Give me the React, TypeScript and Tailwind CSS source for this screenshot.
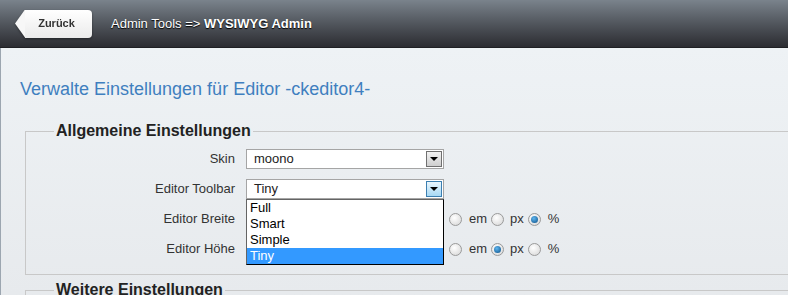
import React from 'react'

const font = { fontFamily: '"Liberation Sans", Arial, sans-serif' }

function Radio({ checked }: { checked?: boolean }) {
  return (
    <span className="relative inline-flex size-[13px] shrink-0 items-center justify-center rounded-full border border-[#9a9a9a] bg-[radial-gradient(circle_at_40%_35%,#ffffff,#d4d4d4)]">
      {checked && (
        <span className="size-[7px] rounded-full bg-[radial-gradient(circle_at_40%_35%,#5fb6f0,#0b4f86)]" />
      )}
    </span>
  )
}

function Select({ value, active }: { value: string; active?: boolean }) {
  return (
    <div className="flex h-[20px] w-[198px] items-stretch border border-[#a5a5a5] bg-white">
      <span className="flex flex-1 items-center pl-[7px] text-[13px] text-[#222]">{value}</span>
      <span
        className={
          active
            ? 'm-px flex w-[16px] items-center justify-center border border-[#3c7fb1] bg-gradient-to-b from-[#eaf6fd] to-[#a7d9f5]'
            : 'm-px flex w-[16px] items-center justify-center border border-[#707070] bg-gradient-to-b from-[#f2f2f2] to-[#cfcfcf]'
        }
      >
        <span className="h-0 w-0 border-x-[4px] border-t-[4px] border-x-transparent border-t-black" />
      </span>
    </div>
  )
}

function Units({ checked }: { checked: 'em' | 'px' | '%' }) {
  return (
    <div className="ml-[5px] flex items-center text-[13px] text-[#333]">
      <Radio checked={checked === 'em'} />
      <span className="ml-[7px]">em</span>
      <span className="ml-[4px] flex"><Radio checked={checked === 'px'} /></span>
      <span className="ml-[6px]">px</span>
      <span className="ml-[4px] flex"><Radio checked={checked === '%'} /></span>
      <span className="ml-[7px]">%</span>
    </div>
  )
}

function Row({ label, children }: { label: string; children: React.ReactNode }) {
  return (
    <div className="flex h-[30px] items-center">
      <span className="w-[181px] text-right text-[13px] text-[#333]">{label}</span>
      <div className="ml-[11px] flex items-center">{children}</div>
    </div>
  )
}

export default function App() {
  return (
    <div style={font} className="h-[295px] w-[788px] overflow-hidden">
      {/* Header bar */}
      <div className="flex h-[48px] items-center border-b border-[#1f2024] bg-gradient-to-b from-[#7a838c] to-[#2c2d32]">
        <div className="ml-[15px] flex h-[28px] items-stretch drop-shadow-[0_1px_1px_rgba(0,0,0,0.4)]">
          <span className="w-[10px] bg-[#f7f7f7] [clip-path:polygon(100%_0,100%_100%,0_50%)]" />
          <span className="flex w-[67px] items-center justify-center rounded-r-[4px] bg-gradient-to-b from-[#ffffff] to-[#ebebeb] pr-[4px] text-[11px] font-bold text-[#333]">
            Zurück
          </span>
        </div>
        <div className="ml-[19px] text-[13px] text-white [text-shadow:0_1px_1px_#000]">
          Admin Tools =&gt; <span className="font-bold">WYSIWYG Admin</span>
        </div>
      </div>

      {/* Body */}
      <div className="h-[247px] border-l border-[#9ca6b0] bg-gradient-to-b from-[#eef2f5] to-[#e7eaed] pt-[30px]">
        <h1 className="ml-[19px] text-[18px] leading-[22px] text-[#3f7fbf]">
          Verwalte Einstellungen für Editor -ckeditor4-
        </h1>

        <fieldset className="ml-[24px] mt-[22px] w-[790px] border border-[#c8c8c8] pb-[10px] pl-[28px]">
          <legend className="px-[2px] text-[16px] font-bold leading-[18px] text-[#222]">
            Allgemeine Einstellungen
          </legend>
          <div className="pt-[4px]">
            <Row label="Skin">
              <Select value="moono" />
            </Row>
            <div className="relative">
              <Row label="Editor Toolbar">
                <Select value="Tiny" active />
              </Row>
              {/* open dropdown list */}
              <div className="absolute left-[192px] top-[25px] z-10 w-[198px] border border-[#646464] border-b-black border-r-black bg-white text-[13px] leading-[16px] text-black">
                <div className="pl-[3px]">Full</div>
                <div className="pl-[3px]">Smart</div>
                <div className="pl-[3px]">Simple</div>
                <div className="bg-[#3399ff] pl-[3px] text-white">Tiny</div>
              </div>
            </div>
            <Row label="Editor Breite">
              <input readOnly className="h-[20px] w-[198px] border border-[#a5a5a5] bg-white" />
              <Units checked="%" />
            </Row>
            <Row label="Editor Höhe">
              <input readOnly className="h-[20px] w-[198px] border border-[#a5a5a5] bg-white" />
              <Units checked="px" />
            </Row>
          </div>
        </fieldset>

        <fieldset className="ml-[24px] mt-[6px] h-[40px] w-[790px] border border-[#c8c8c8] pl-[28px]">
          <legend className="px-[2px] text-[16px] font-bold leading-[18px] text-[#222]">
            Weitere Einstellungen
          </legend>
        </fieldset>
      </div>
    </div>
  )
}
